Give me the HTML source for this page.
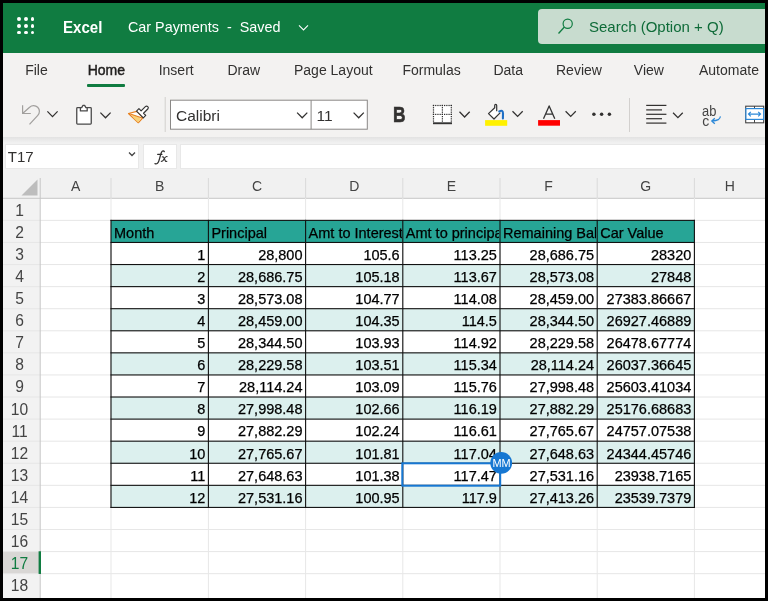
<!DOCTYPE html><html><head><meta charset="utf-8"><style>
*{margin:0;padding:0;box-sizing:border-box}
html,body{width:768px;height:601px;overflow:hidden;background:#000}
body{font-family:"Liberation Sans",sans-serif;position:relative}
#app{position:absolute;left:0;top:0;width:768px;height:601px;background:#fff;clip-path:inset(3px 3px 3px 3px);will-change:transform}
#app div,#app span,#app svg{position:absolute}
.nw{white-space:nowrap}
.tab{font-size:14px;color:#323130;white-space:nowrap;line-height:16px}
.rh{font-size:15.6px;color:#444;text-align:center;width:39px;line-height:18px;white-space:nowrap}
.ch{font-size:14px;color:#444;text-align:center;line-height:16px}
.c{font-size:14.5px;color:#000;-webkit-text-stroke:0.25px #000;white-space:nowrap;overflow:hidden;line-height:16px}
.r{text-align:right}
</style></head><body><div id="app">
<div style="left:0;top:0;width:768px;height:53px;background:#107C41"></div>
<div style="left:17.4px;top:17.4px;width:3.8px;height:3.8px;border-radius:50%;background:#fff"></div>
<div style="left:24.0px;top:17.4px;width:3.8px;height:3.8px;border-radius:50%;background:#fff"></div>
<div style="left:30.6px;top:17.4px;width:3.8px;height:3.8px;border-radius:50%;background:#fff"></div>
<div style="left:17.4px;top:24.0px;width:3.8px;height:3.8px;border-radius:50%;background:#fff"></div>
<div style="left:24.0px;top:24.0px;width:3.8px;height:3.8px;border-radius:50%;background:#fff"></div>
<div style="left:30.6px;top:24.0px;width:3.8px;height:3.8px;border-radius:50%;background:#fff"></div>
<div style="left:17.4px;top:30.6px;width:3.8px;height:3.8px;border-radius:50%;background:#fff"></div>
<div style="left:24.0px;top:30.6px;width:3.8px;height:3.8px;border-radius:50%;background:#fff"></div>
<div style="left:30.6px;top:30.6px;width:3.8px;height:3.8px;border-radius:50%;background:#fff"></div>
<div class="nw" style="left:62.5px;top:18px;font-size:17px;font-weight:bold;color:#fff;line-height:20px;transform:scaleX(0.885);transform-origin:0 0">Excel</div>
<div class="nw" style="left:128px;top:18px;font-size:14.5px;color:#fff;line-height:18px;transform:scaleX(0.99);transform-origin:0 0">Car Payments&nbsp; -&nbsp; Saved</div>
<svg style="left:0;top:0" width="320" height="50" viewBox="0 0 320 50"><path d="M299 25.4 L303.5 29.9 L308 25.4" fill="none" stroke="#fff" stroke-width="1.05"/></svg>
<div style="left:538px;top:9px;width:240px;height:35px;border-radius:4px;background:#C8DCCF"></div>
<svg style="left:555px;top:15px" width="20" height="22" viewBox="0 0 20 22"><circle cx="12.7" cy="8.7" r="4.6" fill="none" stroke="#107C41" stroke-width="1.2"/><path d="M9.4 12 L3.5 18.5" stroke="#107C41" stroke-width="1.3" fill="none"/></svg>
<div class="nw" style="left:589px;top:18px;font-size:15px;color:#0E6B38;line-height:18px">Search (Option + Q)</div>
<div style="left:0;top:53px;width:768px;height:84px;background:#F3F2F1"></div>
<div class="tab" style="left:25.2px;top:62px;">File</div>
<div class="tab" style="left:87.7px;top:62px;color:#201F1E;-webkit-text-stroke:0.45px #201F1E;">Home</div>
<div class="tab" style="left:158.7px;top:62px;">Insert</div>
<div class="tab" style="left:227.5px;top:62px;">Draw</div>
<div class="tab" style="left:294.0px;top:62px;">Page Layout</div>
<div class="tab" style="left:402.4px;top:62px;">Formulas</div>
<div class="tab" style="left:493.4px;top:62px;">Data</div>
<div class="tab" style="left:556.0px;top:62px;">Review</div>
<div class="tab" style="left:633.8px;top:62px;">View</div>
<div class="tab" style="left:699.0px;top:62px;">Automate</div>
<div style="left:87px;top:84px;width:38px;height:3px;border-radius:1px;background:#107C41"></div>
<svg style="left:0;top:92px" width="768" height="45" viewBox="0 92 768 45"><path d="M22.6 105.3 V113.5 H30.8 M22.9 113.2 L29.6 107.2 A5.8 5.8 0 0 1 37.8 115.4 L29.5 124.3" fill="none" stroke="#A19F9D" stroke-width="1.2"/><path d="M47.40 111.40 L52.50 116.60 L57.60 111.40" fill="none" stroke="#323130" stroke-width="1.25"/><rect x="76.75" y="107.6" width="14.5" height="16.5" rx="0.8" fill="#fff" stroke="#4A4A4A" stroke-width="1.3"/><path d="M80.4 107.6 V110.9 H87.2 V107.6 H85.9 L84.6 105.4 H83 L81.7 107.6 Z" fill="#fff" stroke="#4A4A4A" stroke-width="1.3" stroke-linejoin="round"/><path d="M100.40 112.60 L105.50 117.80 L110.60 112.60" fill="none" stroke="#323130" stroke-width="1.25"/><g transform="translate(141.2 113.2) rotate(45)"><path d="M-4.4 1.8 L-8.8 9.2 L4.7 8.8 L4.4 1.8 Z" fill="#fff" stroke="#E8801E" stroke-width="1.15" stroke-linejoin="round"/><path d="M-6.5 7.6 L3.2 3.6 L4.5 8.6 L-2 8.9 Z" fill="#F7D27A" stroke="none"/><path d="M-7.8 8.6 L4.2 2.6" stroke="#E8801E" stroke-width="1.1"/><path d="M-1.7 -1.6 V-7.6 A1.7 1.7 0 0 1 1.7 -7.6 V-1.6 H4.8 V1.8 H-4.8 V-1.6 Z" fill="#fff" stroke="#333" stroke-width="1.15" stroke-linejoin="round"/></g><rect x="164.7" y="97" width="1" height="35" fill="#D2D0CE"/><rect x="170.5" y="100.2" width="196.8" height="29" fill="#fff" stroke="#8A8886" stroke-width="1"/><rect x="310.6" y="100.2" width="1" height="29" fill="#8A8886"/><path d="M297.10 112.60 L302.20 117.80 L307.30 112.60" fill="none" stroke="#323130" stroke-width="1.25"/><path d="M353.60 112.60 L358.70 117.80 L363.80 112.60" fill="none" stroke="#323130" stroke-width="1.25"/><rect x="434" y="106" width="17" height="17" fill="#fff"/><rect x="432.90" y="104.90" width="1.2" height="1.2" fill="#2a2a2a"/><rect x="432.90" y="113.80" width="1.2" height="1.2" fill="#2a2a2a"/><rect x="432.90" y="104.90" width="1.2" height="1.2" fill="#2a2a2a"/><rect x="441.80" y="104.90" width="1.2" height="1.2" fill="#2a2a2a"/><rect x="450.70" y="104.90" width="1.2" height="1.2" fill="#2a2a2a"/><rect x="435.12" y="104.90" width="1.2" height="1.2" fill="#2a2a2a"/><rect x="435.12" y="113.80" width="1.2" height="1.2" fill="#2a2a2a"/><rect x="432.90" y="107.12" width="1.2" height="1.2" fill="#2a2a2a"/><rect x="441.80" y="107.12" width="1.2" height="1.2" fill="#2a2a2a"/><rect x="450.70" y="107.12" width="1.2" height="1.2" fill="#2a2a2a"/><rect x="437.35" y="104.90" width="1.2" height="1.2" fill="#2a2a2a"/><rect x="437.35" y="113.80" width="1.2" height="1.2" fill="#2a2a2a"/><rect x="432.90" y="109.35" width="1.2" height="1.2" fill="#2a2a2a"/><rect x="441.80" y="109.35" width="1.2" height="1.2" fill="#2a2a2a"/><rect x="450.70" y="109.35" width="1.2" height="1.2" fill="#2a2a2a"/><rect x="439.57" y="104.90" width="1.2" height="1.2" fill="#2a2a2a"/><rect x="439.57" y="113.80" width="1.2" height="1.2" fill="#2a2a2a"/><rect x="432.90" y="111.58" width="1.2" height="1.2" fill="#2a2a2a"/><rect x="441.80" y="111.58" width="1.2" height="1.2" fill="#2a2a2a"/><rect x="450.70" y="111.58" width="1.2" height="1.2" fill="#2a2a2a"/><rect x="441.80" y="104.90" width="1.2" height="1.2" fill="#2a2a2a"/><rect x="441.80" y="113.80" width="1.2" height="1.2" fill="#2a2a2a"/><rect x="432.90" y="113.80" width="1.2" height="1.2" fill="#2a2a2a"/><rect x="441.80" y="113.80" width="1.2" height="1.2" fill="#2a2a2a"/><rect x="450.70" y="113.80" width="1.2" height="1.2" fill="#2a2a2a"/><rect x="444.02" y="104.90" width="1.2" height="1.2" fill="#2a2a2a"/><rect x="444.02" y="113.80" width="1.2" height="1.2" fill="#2a2a2a"/><rect x="432.90" y="116.03" width="1.2" height="1.2" fill="#2a2a2a"/><rect x="441.80" y="116.03" width="1.2" height="1.2" fill="#2a2a2a"/><rect x="450.70" y="116.03" width="1.2" height="1.2" fill="#2a2a2a"/><rect x="446.25" y="104.90" width="1.2" height="1.2" fill="#2a2a2a"/><rect x="446.25" y="113.80" width="1.2" height="1.2" fill="#2a2a2a"/><rect x="432.90" y="118.25" width="1.2" height="1.2" fill="#2a2a2a"/><rect x="441.80" y="118.25" width="1.2" height="1.2" fill="#2a2a2a"/><rect x="450.70" y="118.25" width="1.2" height="1.2" fill="#2a2a2a"/><rect x="448.47" y="104.90" width="1.2" height="1.2" fill="#2a2a2a"/><rect x="448.47" y="113.80" width="1.2" height="1.2" fill="#2a2a2a"/><rect x="432.90" y="120.48" width="1.2" height="1.2" fill="#2a2a2a"/><rect x="441.80" y="120.48" width="1.2" height="1.2" fill="#2a2a2a"/><rect x="450.70" y="120.48" width="1.2" height="1.2" fill="#2a2a2a"/><rect x="450.70" y="104.90" width="1.2" height="1.2" fill="#2a2a2a"/><rect x="450.70" y="113.80" width="1.2" height="1.2" fill="#2a2a2a"/><rect x="433" y="122.3" width="19" height="1.9" fill="#333"/><path d="M459.50 111.80 L464.60 117.00 L469.70 111.80" fill="none" stroke="#323130" stroke-width="1.25"/><path d="M494.6 107.8 L488.5 113.6 L494 119 L500.3 112.7 Z" fill="#fff" stroke="none"/><path d="M496.7 111.3 V105.5 Q496.7 104.3 495.7 104.3 Q494.7 104.3 494.7 105.5 V107.8 L488.5 113.6 L494 119 L500.3 112.7" fill="none" stroke="#333" stroke-width="1.2" stroke-linejoin="round"/><path d="M499.3 111.4 Q502.9 109.3 503 113.6 L502.9 118.4" fill="none" stroke="#1F6FC5" stroke-width="2.1" stroke-linecap="round"/><rect x="485.1" y="120.1" width="22.1" height="5.7" fill="#FFF100"/><path d="M512.50 111.20 L517.60 116.40 L522.70 111.20" fill="none" stroke="#323130" stroke-width="1.25"/><path d="M543.5 118.8 L549.15 105.9 L554.8 118.8 M546.1 114.1 H552.3" fill="none" stroke="#333" stroke-width="1.3" stroke-linejoin="round"/><rect x="538.1" y="120.1" width="21.9" height="5.6" fill="#FF0000"/><path d="M565.60 111.20 L570.70 116.40 L575.80 111.20" fill="none" stroke="#323130" stroke-width="1.25"/><circle cx="593.9" cy="114.3" r="1.75" fill="#323130"/><circle cx="601.6" cy="114.3" r="1.75" fill="#323130"/><circle cx="609.4" cy="114.3" r="1.75" fill="#323130"/><rect x="629" y="98" width="1" height="34" fill="#D2D0CE"/><rect x="646.2" y="104.8" width="20.2" height="1.2" fill="#323130"/><rect x="646.2" y="109.3" width="15.8" height="1.2" fill="#323130"/><rect x="646.2" y="113.7" width="20.2" height="1.2" fill="#323130"/><rect x="646.2" y="118.1" width="15.8" height="1.2" fill="#323130"/><rect x="646.2" y="122.5" width="20.2" height="1.2" fill="#323130"/><path d="M673.05 112.70 L677.90 117.70 L682.75 112.70" fill="none" stroke="#323130" stroke-width="1.25"/><path d="M720.3 116.4 Q720.5 120.6 712 121" fill="none" stroke="#2B88D8" stroke-width="1.3"/><path d="M714.8 118.2 L711.8 121 L714.8 123.8" fill="none" stroke="#2B88D8" stroke-width="1.3"/><rect x="745.7" y="106.2" width="18" height="16.6" fill="#fff" stroke="#444" stroke-width="1.1"/><rect x="754" y="106" width="1" height="3" fill="#444"/><rect x="754" y="119.8" width="1" height="3" fill="#444"/><rect x="745.9" y="108.6" width="17.8" height="10.8" fill="#fff" stroke="#2B88D8" stroke-width="1.2"/><path d="M748.5 114.1 H760.5 M750.8 111.8 L748.5 114.1 L750.8 116.4 M758.2 111.8 L760.5 114.1 L758.2 116.4" fill="none" stroke="#2B88D8" stroke-width="1.2"/></svg>
<div class="nw" style="left:176px;top:107px;font-size:15.5px;color:#323130;line-height:17px">Calibri</div>
<div class="nw" style="left:316.6px;top:107px;font-size:15.5px;color:#323130;line-height:17px">11</div>
<div class="nw" style="left:392.8px;top:101.5px;font-size:22.5px;font-weight:bold;color:#323130;line-height:26px;transform:scaleX(0.77);transform-origin:0 0;-webkit-text-stroke:0.6px #323130">B</div>
<div class="nw" style="left:702.2px;top:104px;font-size:14px;color:#444;line-height:15px;letter-spacing:0.2px;transform:scaleX(0.92);transform-origin:0 0">ab</div>
<div class="nw" style="left:702.2px;top:113.6px;font-size:14px;color:#444;line-height:15px">c</div>
<div style="left:0;top:137px;width:768px;height:61px;background:#F1F1F1"></div>
<div style="left:0;top:137px;width:768px;height:6px;background:linear-gradient(#E2E2E2,#F1F1F1)"></div>
<div style="left:5px;top:143.5px;width:134px;height:25px;background:#fff;border:1px solid #E8E8E8"></div>
<div class="nw" style="left:7.8px;top:147.5px;font-size:15px;color:#323130;line-height:17px">T17</div>
<svg style="left:128px;top:151px" width="8" height="6" viewBox="0 0 8 6"><path d="M1 1.5 L4 4.5 L7 1.5" fill="none" stroke="#444" stroke-width="1.3"/></svg>
<div style="left:143px;top:143.5px;width:34px;height:25px;background:#fff;border:1px solid #E8E8E8"></div>
<svg style="left:140px;top:140px" width="40" height="30" viewBox="140 140 40 30"><g fill="none" stroke="#323130" stroke-width="1.15" stroke-linecap="round"><path d="M164.3 151.7 C163.9 150.4 162.4 150.4 161.5 152.2 C160.6 154.2 159.7 158.5 158.7 161.4 C158 163.4 156.6 164.4 155 163.6" stroke-width="1.3"/><path d="M157.6 154.3 H162"/><path d="M162.3 156.9 C163.6 156.2 164.2 158 164.8 159.8 C165.3 161.2 165.8 161.9 166.8 161.3"/><path d="M167 156.6 C165.9 156.1 164.9 157.6 164.1 159 C163.3 160.6 162.4 161.7 161.3 161.3"/></g></svg>
<div style="left:180px;top:143.5px;width:600px;height:25px;background:#fff;border:1px solid #E8E8E8"></div>
<svg style="left:0;top:170px" width="768" height="431" viewBox="0 170 768 431"><rect x="40" y="198" width="730" height="410" fill="#fff"/><rect x="0" y="198" width="40.2" height="410" fill="#F2F2F2"/><rect x="0" y="551.58" width="40.2" height="22.08" fill="#D9D7D5"/><rect x="0" y="197.80" width="768" height="1" fill="#C6C6C6"/><rect x="0" y="219.88" width="768" height="1" fill="#E7E7E7"/><rect x="0" y="241.96" width="768" height="1" fill="#E7E7E7"/><rect x="0" y="264.04" width="768" height="1" fill="#E7E7E7"/><rect x="0" y="286.12" width="768" height="1" fill="#E7E7E7"/><rect x="0" y="308.20" width="768" height="1" fill="#E7E7E7"/><rect x="0" y="330.28" width="768" height="1" fill="#E7E7E7"/><rect x="0" y="352.36" width="768" height="1" fill="#E7E7E7"/><rect x="0" y="374.44" width="768" height="1" fill="#E7E7E7"/><rect x="0" y="396.52" width="768" height="1" fill="#E7E7E7"/><rect x="0" y="418.60" width="768" height="1" fill="#E7E7E7"/><rect x="0" y="440.68" width="768" height="1" fill="#E7E7E7"/><rect x="0" y="462.76" width="768" height="1" fill="#E7E7E7"/><rect x="0" y="484.84" width="768" height="1" fill="#E7E7E7"/><rect x="0" y="506.92" width="768" height="1" fill="#E7E7E7"/><rect x="0" y="529.00" width="768" height="1" fill="#E7E7E7"/><rect x="0" y="551.08" width="768" height="1" fill="#E7E7E7"/><rect x="0" y="573.16" width="768" height="1" fill="#E7E7E7"/><rect x="39.70" y="178" width="1" height="430" fill="#C6C6C6"/><rect x="110.50" y="198" width="1" height="410" fill="#E7E7E7"/><rect x="110.50" y="178" width="1" height="20" fill="#DADADA"/><rect x="207.90" y="198" width="1" height="410" fill="#E7E7E7"/><rect x="207.90" y="178" width="1" height="20" fill="#DADADA"/><rect x="305.10" y="198" width="1" height="410" fill="#E7E7E7"/><rect x="305.10" y="178" width="1" height="20" fill="#DADADA"/><rect x="402.30" y="198" width="1" height="410" fill="#E7E7E7"/><rect x="402.30" y="178" width="1" height="20" fill="#DADADA"/><rect x="499.50" y="198" width="1" height="410" fill="#E7E7E7"/><rect x="499.50" y="178" width="1" height="20" fill="#DADADA"/><rect x="596.70" y="198" width="1" height="410" fill="#E7E7E7"/><rect x="596.70" y="178" width="1" height="20" fill="#DADADA"/><rect x="693.90" y="198" width="1" height="410" fill="#E7E7E7"/><rect x="693.90" y="178" width="1" height="20" fill="#DADADA"/><rect x="791.10" y="198" width="1" height="410" fill="#E7E7E7"/><rect x="791.10" y="178" width="1" height="20" fill="#DADADA"/><path d="M21.5 195.5 L37.5 195.5 L37.5 179.5 Z" fill="#BDBDBD"/><rect x="38.6" y="551.28" width="2.4" height="22.68" fill="#107C41"/><rect x="111.00" y="220.38" width="583.40" height="22.08" fill="#27A596"/><rect x="111.00" y="264.54" width="583.40" height="22.08" fill="#DCF0EE"/><rect x="111.00" y="308.70" width="583.40" height="22.08" fill="#DCF0EE"/><rect x="111.00" y="352.86" width="583.40" height="22.08" fill="#DCF0EE"/><rect x="111.00" y="397.02" width="583.40" height="22.08" fill="#DCF0EE"/><rect x="111.00" y="441.18" width="583.40" height="22.08" fill="#DCF0EE"/><rect x="111.00" y="485.34" width="583.40" height="22.08" fill="#DCF0EE"/><rect x="110.45" y="219.83" width="584.50" height="1.1" fill="#111"/><rect x="110.45" y="241.91" width="584.50" height="1.1" fill="#111"/><rect x="110.45" y="263.99" width="584.50" height="1.1" fill="#111"/><rect x="110.45" y="286.07" width="584.50" height="1.1" fill="#111"/><rect x="110.45" y="308.15" width="584.50" height="1.1" fill="#111"/><rect x="110.45" y="330.23" width="584.50" height="1.1" fill="#111"/><rect x="110.45" y="352.31" width="584.50" height="1.1" fill="#111"/><rect x="110.45" y="374.39" width="584.50" height="1.1" fill="#111"/><rect x="110.45" y="396.47" width="584.50" height="1.1" fill="#111"/><rect x="110.45" y="418.55" width="584.50" height="1.1" fill="#111"/><rect x="110.45" y="440.63" width="584.50" height="1.1" fill="#111"/><rect x="110.45" y="462.71" width="584.50" height="1.1" fill="#111"/><rect x="110.45" y="484.79" width="584.50" height="1.1" fill="#111"/><rect x="110.45" y="506.87" width="584.50" height="1.1" fill="#111"/><rect x="110.45" y="219.83" width="1.1" height="288.14" fill="#111"/><rect x="207.85" y="219.83" width="1.1" height="288.14" fill="#111"/><rect x="305.05" y="219.83" width="1.1" height="288.14" fill="#111"/><rect x="402.25" y="219.83" width="1.1" height="288.14" fill="#111"/><rect x="499.45" y="219.83" width="1.1" height="288.14" fill="#111"/><rect x="596.65" y="219.83" width="1.1" height="288.14" fill="#111"/><rect x="693.85" y="219.83" width="1.1" height="288.14" fill="#111"/></svg>
<div class="ch" style="left:40.2px;top:178px;width:70.8px">A</div>
<div class="ch" style="left:111.0px;top:178px;width:97.4px">B</div>
<div class="ch" style="left:208.4px;top:178px;width:97.2px">C</div>
<div class="ch" style="left:305.6px;top:178px;width:97.2px">D</div>
<div class="ch" style="left:402.8px;top:178px;width:97.2px">E</div>
<div class="ch" style="left:500.0px;top:178px;width:97.2px">F</div>
<div class="ch" style="left:597.2px;top:178px;width:97.2px">G</div>
<div class="ch" style="left:694.4px;top:178px;width:70.6px">H</div>
<div class="rh" style="left:0;top:201.8px;color:#444">1</div>
<div class="rh" style="left:0;top:223.9px;color:#444">2</div>
<div class="rh" style="left:0;top:246.0px;color:#444">3</div>
<div class="rh" style="left:0;top:268.0px;color:#444">4</div>
<div class="rh" style="left:0;top:290.1px;color:#444">5</div>
<div class="rh" style="left:0;top:312.2px;color:#444">6</div>
<div class="rh" style="left:0;top:334.3px;color:#444">7</div>
<div class="rh" style="left:0;top:356.4px;color:#444">8</div>
<div class="rh" style="left:0;top:378.4px;color:#444">9</div>
<div class="rh" style="left:0;top:400.5px;color:#444">10</div>
<div class="rh" style="left:0;top:422.6px;color:#444">11</div>
<div class="rh" style="left:0;top:444.7px;color:#444">12</div>
<div class="rh" style="left:0;top:466.8px;color:#444">13</div>
<div class="rh" style="left:0;top:488.8px;color:#444">14</div>
<div class="rh" style="left:0;top:510.9px;color:#444">15</div>
<div class="rh" style="left:0;top:533.0px;color:#444">16</div>
<div class="rh" style="left:0;top:555.1px;color:#107C41">17</div>
<div class="rh" style="left:0;top:577.2px;color:#444">18</div>
<div class="c" style="left:111.0px;top:224.7px;width:96.4px;padding-left:3px">Month</div>
<div class="c" style="left:208.4px;top:224.7px;width:96.2px;padding-left:3px">Principal</div>
<div class="c" style="left:305.6px;top:224.7px;width:96.2px;padding-left:3px">Amt to Interest</div>
<div class="c" style="left:402.8px;top:224.7px;width:96.2px;padding-left:3px">Amt to principal</div>
<div class="c" style="left:500.0px;top:224.7px;width:96.2px;padding-left:3px">Remaining Balance</div>
<div class="c" style="left:597.2px;top:224.7px;width:96.2px;padding-left:3px">Car Value</div>
<div class="c r" style="left:111.5px;top:246.8px;width:96.4px;padding-right:2.6px">1</div>
<div class="c r" style="left:208.9px;top:246.8px;width:96.2px;padding-right:2.6px">28,800</div>
<div class="c r" style="left:306.1px;top:246.8px;width:96.2px;padding-right:2.6px">105.6</div>
<div class="c r" style="left:403.3px;top:246.8px;width:96.2px;padding-right:2.6px">113.25</div>
<div class="c r" style="left:500.5px;top:246.8px;width:96.2px;padding-right:2.6px">28,686.75</div>
<div class="c r" style="left:597.7px;top:246.8px;width:96.2px;padding-right:2.6px">28320</div>
<div class="c r" style="left:111.5px;top:268.8px;width:96.4px;padding-right:2.6px">2</div>
<div class="c r" style="left:208.9px;top:268.8px;width:96.2px;padding-right:2.6px">28,686.75</div>
<div class="c r" style="left:306.1px;top:268.8px;width:96.2px;padding-right:2.6px">105.18</div>
<div class="c r" style="left:403.3px;top:268.8px;width:96.2px;padding-right:2.6px">113.67</div>
<div class="c r" style="left:500.5px;top:268.8px;width:96.2px;padding-right:2.6px">28,573.08</div>
<div class="c r" style="left:597.7px;top:268.8px;width:96.2px;padding-right:2.6px">27848</div>
<div class="c r" style="left:111.5px;top:290.9px;width:96.4px;padding-right:2.6px">3</div>
<div class="c r" style="left:208.9px;top:290.9px;width:96.2px;padding-right:2.6px">28,573.08</div>
<div class="c r" style="left:306.1px;top:290.9px;width:96.2px;padding-right:2.6px">104.77</div>
<div class="c r" style="left:403.3px;top:290.9px;width:96.2px;padding-right:2.6px">114.08</div>
<div class="c r" style="left:500.5px;top:290.9px;width:96.2px;padding-right:2.6px">28,459.00</div>
<div class="c r" style="left:597.7px;top:290.9px;width:96.2px;padding-right:2.6px">27383.86667</div>
<div class="c r" style="left:111.5px;top:313.0px;width:96.4px;padding-right:2.6px">4</div>
<div class="c r" style="left:208.9px;top:313.0px;width:96.2px;padding-right:2.6px">28,459.00</div>
<div class="c r" style="left:306.1px;top:313.0px;width:96.2px;padding-right:2.6px">104.35</div>
<div class="c r" style="left:403.3px;top:313.0px;width:96.2px;padding-right:2.6px">114.5</div>
<div class="c r" style="left:500.5px;top:313.0px;width:96.2px;padding-right:2.6px">28,344.50</div>
<div class="c r" style="left:597.7px;top:313.0px;width:96.2px;padding-right:2.6px">26927.46889</div>
<div class="c r" style="left:111.5px;top:335.1px;width:96.4px;padding-right:2.6px">5</div>
<div class="c r" style="left:208.9px;top:335.1px;width:96.2px;padding-right:2.6px">28,344.50</div>
<div class="c r" style="left:306.1px;top:335.1px;width:96.2px;padding-right:2.6px">103.93</div>
<div class="c r" style="left:403.3px;top:335.1px;width:96.2px;padding-right:2.6px">114.92</div>
<div class="c r" style="left:500.5px;top:335.1px;width:96.2px;padding-right:2.6px">28,229.58</div>
<div class="c r" style="left:597.7px;top:335.1px;width:96.2px;padding-right:2.6px">26478.67774</div>
<div class="c r" style="left:111.5px;top:357.2px;width:96.4px;padding-right:2.6px">6</div>
<div class="c r" style="left:208.9px;top:357.2px;width:96.2px;padding-right:2.6px">28,229.58</div>
<div class="c r" style="left:306.1px;top:357.2px;width:96.2px;padding-right:2.6px">103.51</div>
<div class="c r" style="left:403.3px;top:357.2px;width:96.2px;padding-right:2.6px">115.34</div>
<div class="c r" style="left:500.5px;top:357.2px;width:96.2px;padding-right:2.6px">28,114.24</div>
<div class="c r" style="left:597.7px;top:357.2px;width:96.2px;padding-right:2.6px">26037.36645</div>
<div class="c r" style="left:111.5px;top:379.2px;width:96.4px;padding-right:2.6px">7</div>
<div class="c r" style="left:208.9px;top:379.2px;width:96.2px;padding-right:2.6px">28,114.24</div>
<div class="c r" style="left:306.1px;top:379.2px;width:96.2px;padding-right:2.6px">103.09</div>
<div class="c r" style="left:403.3px;top:379.2px;width:96.2px;padding-right:2.6px">115.76</div>
<div class="c r" style="left:500.5px;top:379.2px;width:96.2px;padding-right:2.6px">27,998.48</div>
<div class="c r" style="left:597.7px;top:379.2px;width:96.2px;padding-right:2.6px">25603.41034</div>
<div class="c r" style="left:111.5px;top:401.3px;width:96.4px;padding-right:2.6px">8</div>
<div class="c r" style="left:208.9px;top:401.3px;width:96.2px;padding-right:2.6px">27,998.48</div>
<div class="c r" style="left:306.1px;top:401.3px;width:96.2px;padding-right:2.6px">102.66</div>
<div class="c r" style="left:403.3px;top:401.3px;width:96.2px;padding-right:2.6px">116.19</div>
<div class="c r" style="left:500.5px;top:401.3px;width:96.2px;padding-right:2.6px">27,882.29</div>
<div class="c r" style="left:597.7px;top:401.3px;width:96.2px;padding-right:2.6px">25176.68683</div>
<div class="c r" style="left:111.5px;top:423.4px;width:96.4px;padding-right:2.6px">9</div>
<div class="c r" style="left:208.9px;top:423.4px;width:96.2px;padding-right:2.6px">27,882.29</div>
<div class="c r" style="left:306.1px;top:423.4px;width:96.2px;padding-right:2.6px">102.24</div>
<div class="c r" style="left:403.3px;top:423.4px;width:96.2px;padding-right:2.6px">116.61</div>
<div class="c r" style="left:500.5px;top:423.4px;width:96.2px;padding-right:2.6px">27,765.67</div>
<div class="c r" style="left:597.7px;top:423.4px;width:96.2px;padding-right:2.6px">24757.07538</div>
<div class="c r" style="left:111.5px;top:445.5px;width:96.4px;padding-right:2.6px">10</div>
<div class="c r" style="left:208.9px;top:445.5px;width:96.2px;padding-right:2.6px">27,765.67</div>
<div class="c r" style="left:306.1px;top:445.5px;width:96.2px;padding-right:2.6px">101.81</div>
<div class="c r" style="left:403.3px;top:445.5px;width:96.2px;padding-right:2.6px">117.04</div>
<div class="c r" style="left:500.5px;top:445.5px;width:96.2px;padding-right:2.6px">27,648.63</div>
<div class="c r" style="left:597.7px;top:445.5px;width:96.2px;padding-right:2.6px">24344.45746</div>
<div class="c r" style="left:111.5px;top:467.6px;width:96.4px;padding-right:2.6px">11</div>
<div class="c r" style="left:208.9px;top:467.6px;width:96.2px;padding-right:2.6px">27,648.63</div>
<div class="c r" style="left:306.1px;top:467.6px;width:96.2px;padding-right:2.6px">101.38</div>
<div class="c r" style="left:403.3px;top:467.6px;width:96.2px;padding-right:2.6px">117.47</div>
<div class="c r" style="left:500.5px;top:467.6px;width:96.2px;padding-right:2.6px">27,531.16</div>
<div class="c r" style="left:597.7px;top:467.6px;width:96.2px;padding-right:2.6px">23938.7165</div>
<div class="c r" style="left:111.5px;top:489.6px;width:96.4px;padding-right:2.6px">12</div>
<div class="c r" style="left:208.9px;top:489.6px;width:96.2px;padding-right:2.6px">27,531.16</div>
<div class="c r" style="left:306.1px;top:489.6px;width:96.2px;padding-right:2.6px">100.95</div>
<div class="c r" style="left:403.3px;top:489.6px;width:96.2px;padding-right:2.6px">117.9</div>
<div class="c r" style="left:500.5px;top:489.6px;width:96.2px;padding-right:2.6px">27,413.26</div>
<div class="c r" style="left:597.7px;top:489.6px;width:96.2px;padding-right:2.6px">23539.7379</div>
<svg style="left:380px;top:440px" width="150" height="60" viewBox="380 440 150 60"><rect x="402.3" y="463.3" width="97.9" height="22.4" fill="none" stroke="#1677D2" stroke-width="2"/><circle cx="501.2" cy="462.9" r="10.9" fill="#1677D2"/></svg>
<div class="nw" style="left:489.7px;top:456px;width:23px;text-align:center;font-size:11.5px;color:#fff;line-height:14px;transform:scaleX(0.95);transform-origin:50% 0">MM</div>
</div></body></html>
